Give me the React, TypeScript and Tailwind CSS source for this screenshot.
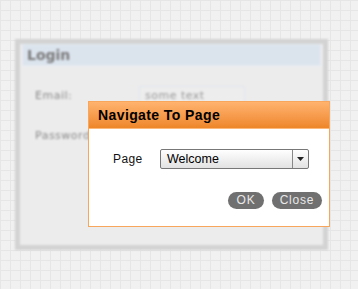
import React from "react";

const LoginBehind: React.FC = () => {
  return (
    <div className="ml-[15px] mt-[38px] w-[313px] h-[211px] border-[5px] border-[#d3d3d3] bg-[#ececec] blur-[0.8px]">
      <div className="mx-[2px] h-[22px] bg-[#dbe3ed] border border-[#e6ecf3] flex items-center pl-[4px]">
        <span className="text-[14px] font-bold text-[#7a7a7a]">Login</span>
      </div>
      <div className="pl-[15px] pt-[20px] text-[11px] text-[#8a8a8a] tracking-[0.5px]">
        <div className="flex items-center h-[21px]">
          <span className="w-[104px]">Email:</span>
          <div className="w-[106px] h-[21px] border border-[#dfe5ee] bg-[#ededed] pl-[5px] flex items-center text-[#999]">some text</div>
        </div>
        <div className="flex items-center h-[21px] mt-[19px]">
          <span className="w-[104px]">Password:</span>
        </div>
      </div>
    </div>
  );
};

const NavigateDialog: React.FC = () => {
  return (
    <div
      className="absolute left-[88px] top-[101px] w-[242px] h-[126px] bg-white border border-[#f7a65c]"
      style={{ fontFamily: '"Liberation Sans", Arial, sans-serif' }}
    >
      <div className="h-[27px] bg-gradient-to-b from-[#ffb36e] to-[#ee8628] border-b border-[#fcb77a] flex items-center pl-[9px]">
        <span className="text-[14px] font-bold text-black tracking-[0.4px]">Navigate To Page</span>
      </div>
      <div className="flex items-center mt-[20px] pl-[24px]">
        <span className="text-[12px] text-[#111] w-[47px] tracking-[0.4px]">Page</span>
        <div className="w-[149px] h-[20px] rounded-[2px] border border-[#777] bg-gradient-to-b from-white to-[#e2e2e2] flex">
          <span className="flex-1 pl-[6px] text-[12.5px] leading-[18px] text-black">Welcome</span>
          <div className="w-[16px] border-l border-[#888] flex items-center justify-center">
            <svg width="7" height="4" viewBox="0 0 7 4"><path d="M0 0h7L3.5 4z" fill="#222" /></svg>
          </div>
        </div>
      </div>
      <div className="flex justify-end gap-[8px] pr-[7px] mt-[23px]">
        <button className="w-[36px] h-[17px] rounded-full bg-[#707070] text-[12px] text-[#e8e8e8] tracking-[0.8px] leading-[17px]">OK</button>
        <button className="w-[50px] h-[17px] rounded-full bg-[#707070] text-[12px] text-[#e8e8e8] tracking-[0.8px] leading-[17px]">Close</button>
      </div>
    </div>
  );
};

const App: React.FC = () => {
  return (
    <div
      className="relative w-[358px] h-[289px] overflow-hidden bg-[#f1f1f1] bg-[linear-gradient(#e6e6e6_1px,transparent_1px),linear-gradient(90deg,#e6e6e6_1px,transparent_1px)] bg-[size:10px_10px] pt-px"
      style={{ fontFamily: '"DejaVu Sans", "Liberation Sans", sans-serif' }}
    >
      <LoginBehind />
      <NavigateDialog />
    </div>
  );
};

export default App;
